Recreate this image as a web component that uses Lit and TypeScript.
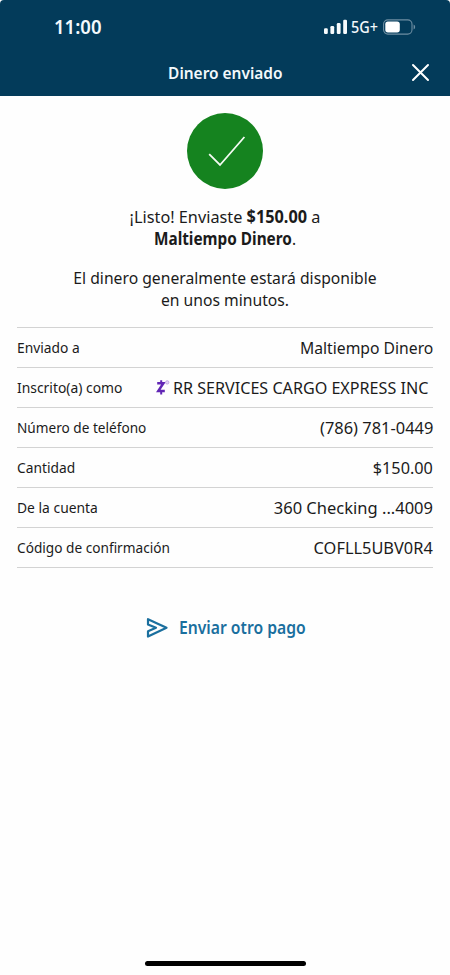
import { LitElement, html, css, nothing } from "lit";
import { customElement, property } from "lit/decorators.js";
import { styleMap } from "lit/directives/style-map.js";

interface Row {
  label: string;
  labelScale: number;
  value: string;
  valueScale: number;
  zelle?: boolean;
}

const rows: Row[] = [
  { label: "Enviado a", labelScale: 0.92, value: "Maltiempo Dinero", valueScale: 0.924 },
  { label: "Inscrito(a) como", labelScale: 0.925, value: "RR SERVICES CARGO EXPRESS INC", valueScale: 0.948, zelle: true },
  { label: "Número de teléfono", labelScale: 0.908, value: "(786) 781-0449", valueScale: 0.966 },
  { label: "Cantidad", labelScale: 0.918, value: "$150.00", valueScale: 0.956 },
  { label: "De la cuenta", labelScale: 0.924, value: "360 Checking ...4009", valueScale: 0.971 },
  { label: "Código de confirmación", labelScale: 0.91, value: "COFLL5UBV0R4", valueScale: 0.963 },
];

/** One table line: a label on the left, its value on the right. */
@customElement("detail-row")
export class DetailRow extends LitElement {
  @property({ attribute: false }) row!: Row;

  static styles = css`
    :host {
      display: flex;
      align-items: center;
      justify-content: space-between;
      box-sizing: border-box;
      height: 40.07px;
      border-bottom: 1px solid #d3d3d3;
      white-space: nowrap;
      color: #1b1b1b;
    }
    .label {
      font-size: 15px;
      margin-bottom: 2px;
      transform-origin: left center;
    }
    .value {
      display: flex;
      align-items: center;
      justify-content: flex-end;
      width: 0;
      font-size: 17px;
    }
    .text {
      transform-origin: right center;
      flex: none;
    }
    .zelle .text {
      margin-right: 5px;
    }
    .zelle {
      position: relative;
    }
    .mark {
      position: absolute;
      right: 263px;
      top: 3px;
      width: 14px;
      height: 17px;
    }
  `;

  render() {
    const r = this.row;
    return html`
      <span class="label" style=${styleMap({ transform: `scaleX(${r.labelScale})` })}>${r.label}</span>
      <span class="value ${r.zelle ? "zelle" : ""}">
        ${r.zelle
          ? html`<svg class="mark" viewBox="0 0 14 17">
              <path d="M1.2 4.3H7.4L2.2 12.1H8.8" fill="none" stroke="#6126b5" stroke-width="2.5" />
              <path d="M5.2 1.2V4M5.2 12.5V15.4" fill="none" stroke="#6126b5" stroke-width="2" />
              <circle cx="11.2" cy="3.4" r="1.7" fill="#e3d5f5" stroke="#bb9ce0" stroke-width="0.8" />
            </svg>`
          : nothing}
        <span class="text" style=${styleMap({ transform: `scaleX(${r.valueScale})` })}>${r.value}</span>
      </span>
    `;
  }
}

@customElement("app-root")
export class AppRoot extends LitElement {
  static styles = css`
    :host {
      display: flex;
      flex-direction: column;
      box-sizing: border-box;
      height: 975px;
      background: #fefefe;
      font-family: "Noto Sans", "Open Sans", sans-serif;
      color: #1b1b1b;
      white-space: nowrap;
      overflow: hidden;
    }
    .top {
      height: 96px;
      flex: none;
      background: #033b5a;
      border-radius: 4px 4px 0 0;
      color: #f3f9fc;
    }
    .status {
      display: flex;
      align-items: center;
      height: 54px;
      padding: 0 34px 0 54px;
      box-sizing: border-box;
    }
    .time {
      flex: 1;
      font: 600 19.5px/24px "Noto Sans", sans-serif;
      transform: scaleX(0.95);
      transform-origin: left center;
    }
    .signal {
      width: 24px;
      height: 16px;
    }
    .network {
      width: 27px;
      margin: 0 5px 0 3px;
      font-size: 15.5px;
      font-weight: 500;
      line-height: 20px;
    }
    .network span {
      display: inline-block;
      transform: scaleX(0.93);
      transform-origin: left center;
    }
    .battery {
      width: 33px;
      height: 16px;
    }
    .bar {
      display: grid;
      grid-template-columns: 1fr auto 1fr;
      align-items: center;
      height: 38px;
      padding: 0 20px;
    }
    .title {
      grid-column: 2;
      font-size: 16px;
      font-weight: 600;
      line-height: 22px;
      transform: scaleX(0.965);
    }
    .close {
      justify-self: end;
      width: 19px;
      height: 19px;
      margin-top: -1px;
    }
    .badge {
      display: block;
      flex: none;
      width: 76px;
      height: 76px;
      margin: 17px auto 0;
    }
    .message {
      margin: 17px 0 0;
      text-align: center;
      font-size: 17px;
      line-height: 22px;
    }
    .message.second {
      margin-top: 17px;
    }
    .line {
      display: block;
    }
    .amount {
      transform: scaleX(0.957);
    }
    .person {
      transform: scaleX(0.902);
    }
    .note {
      transform: scaleX(0.923);
    }
    .details {
      margin: 16px 17px 0;
      border-top: 1px solid #d3d3d3;
    }
    .again {
      display: flex;
      align-items: center;
      margin: 48px 0 0 146px;
      color: #1a6f9e;
      font-size: 17px;
      font-weight: 600;
      line-height: 24px;
    }
    .again span {
      margin-left: 10.5px;
      transform: scaleX(0.923);
      transform-origin: left center;
    }
    .plane {
      width: 22px;
      height: 22px;
    }
    .home {
      flex: none;
      width: 161px;
      height: 5.5px;
      margin: auto auto 9px;
      border-radius: 3px;
      background: #000;
    }
  `;

  render() {
    return html`
      <header class="top">
        <div class="status">
          <span class="time">11:00</span>
          <svg class="signal" viewBox="0 0 24 16" fill="#f7fbfd">
            <rect x="0" y="9.3" width="3.8" height="5.7" rx="1.2" />
            <rect x="6.4" y="7" width="3.8" height="8" rx="1.2" />
            <rect x="12.8" y="4" width="3.8" height="11" rx="1.2" />
            <rect x="19.2" y="0.8" width="3.8" height="14.2" rx="1.2" />
          </svg>
          <span class="network"><span>5G+</span></span>
          <svg class="battery" viewBox="0 0 33 16">
            <rect x="0.6" y="0.9" width="28.4" height="14.2" rx="4.3" fill="none" stroke="#6f8fa3" stroke-width="1.1" />
            <rect x="2.3" y="2.6" width="14.5" height="10.8" rx="2.6" fill="#fff" />
            <path d="M30.6 5.6Q32.2 6.4 32.2 8T30.6 10.4Z" fill="#6f8fa3" />
          </svg>
        </div>
        <div class="bar">
          <span class="title">Dinero enviado</span>
          <svg class="close" viewBox="0 0 19 19">
            <path d="M2 2L17 17M17 2L2 17" stroke="#fff" stroke-width="2" stroke-linecap="round" />
          </svg>
        </div>
      </header>
      <svg class="badge" viewBox="0 0 76 76">
        <circle cx="38" cy="38" r="38" fill="#15831f" />
        <path d="M22.2 41.2L33 52L57.4 24" fill="none" stroke="#f4fbf3" stroke-width="1.8" />
      </svg>
      <p class="message">
        <span class="line amount">¡Listo! Enviaste <b>$150.00</b> a</span>
        <span class="line person"><b>Maltiempo Dinero</b>.</span>
      </p>
      <p class="message second">
        <span class="line note">El dinero generalmente estará disponible</span>
        <span class="line note">en unos minutos.</span>
      </p>
      <section class="details">${rows.map((r) => html`<detail-row .row=${r}></detail-row>`)}</section>
      <div class="again">
        <svg class="plane" viewBox="0 0 22 22">
          <path d="M2 2.2L20.5 10.8L2 19.5V14.2L10 10.8L2 7.6Z" fill="none" stroke="#1a6f9e" stroke-width="2.2" stroke-linejoin="round" />
        </svg>
        <span>Enviar otro pago</span>
      </div>
      <div class="home"></div>
    `;
  }
}
